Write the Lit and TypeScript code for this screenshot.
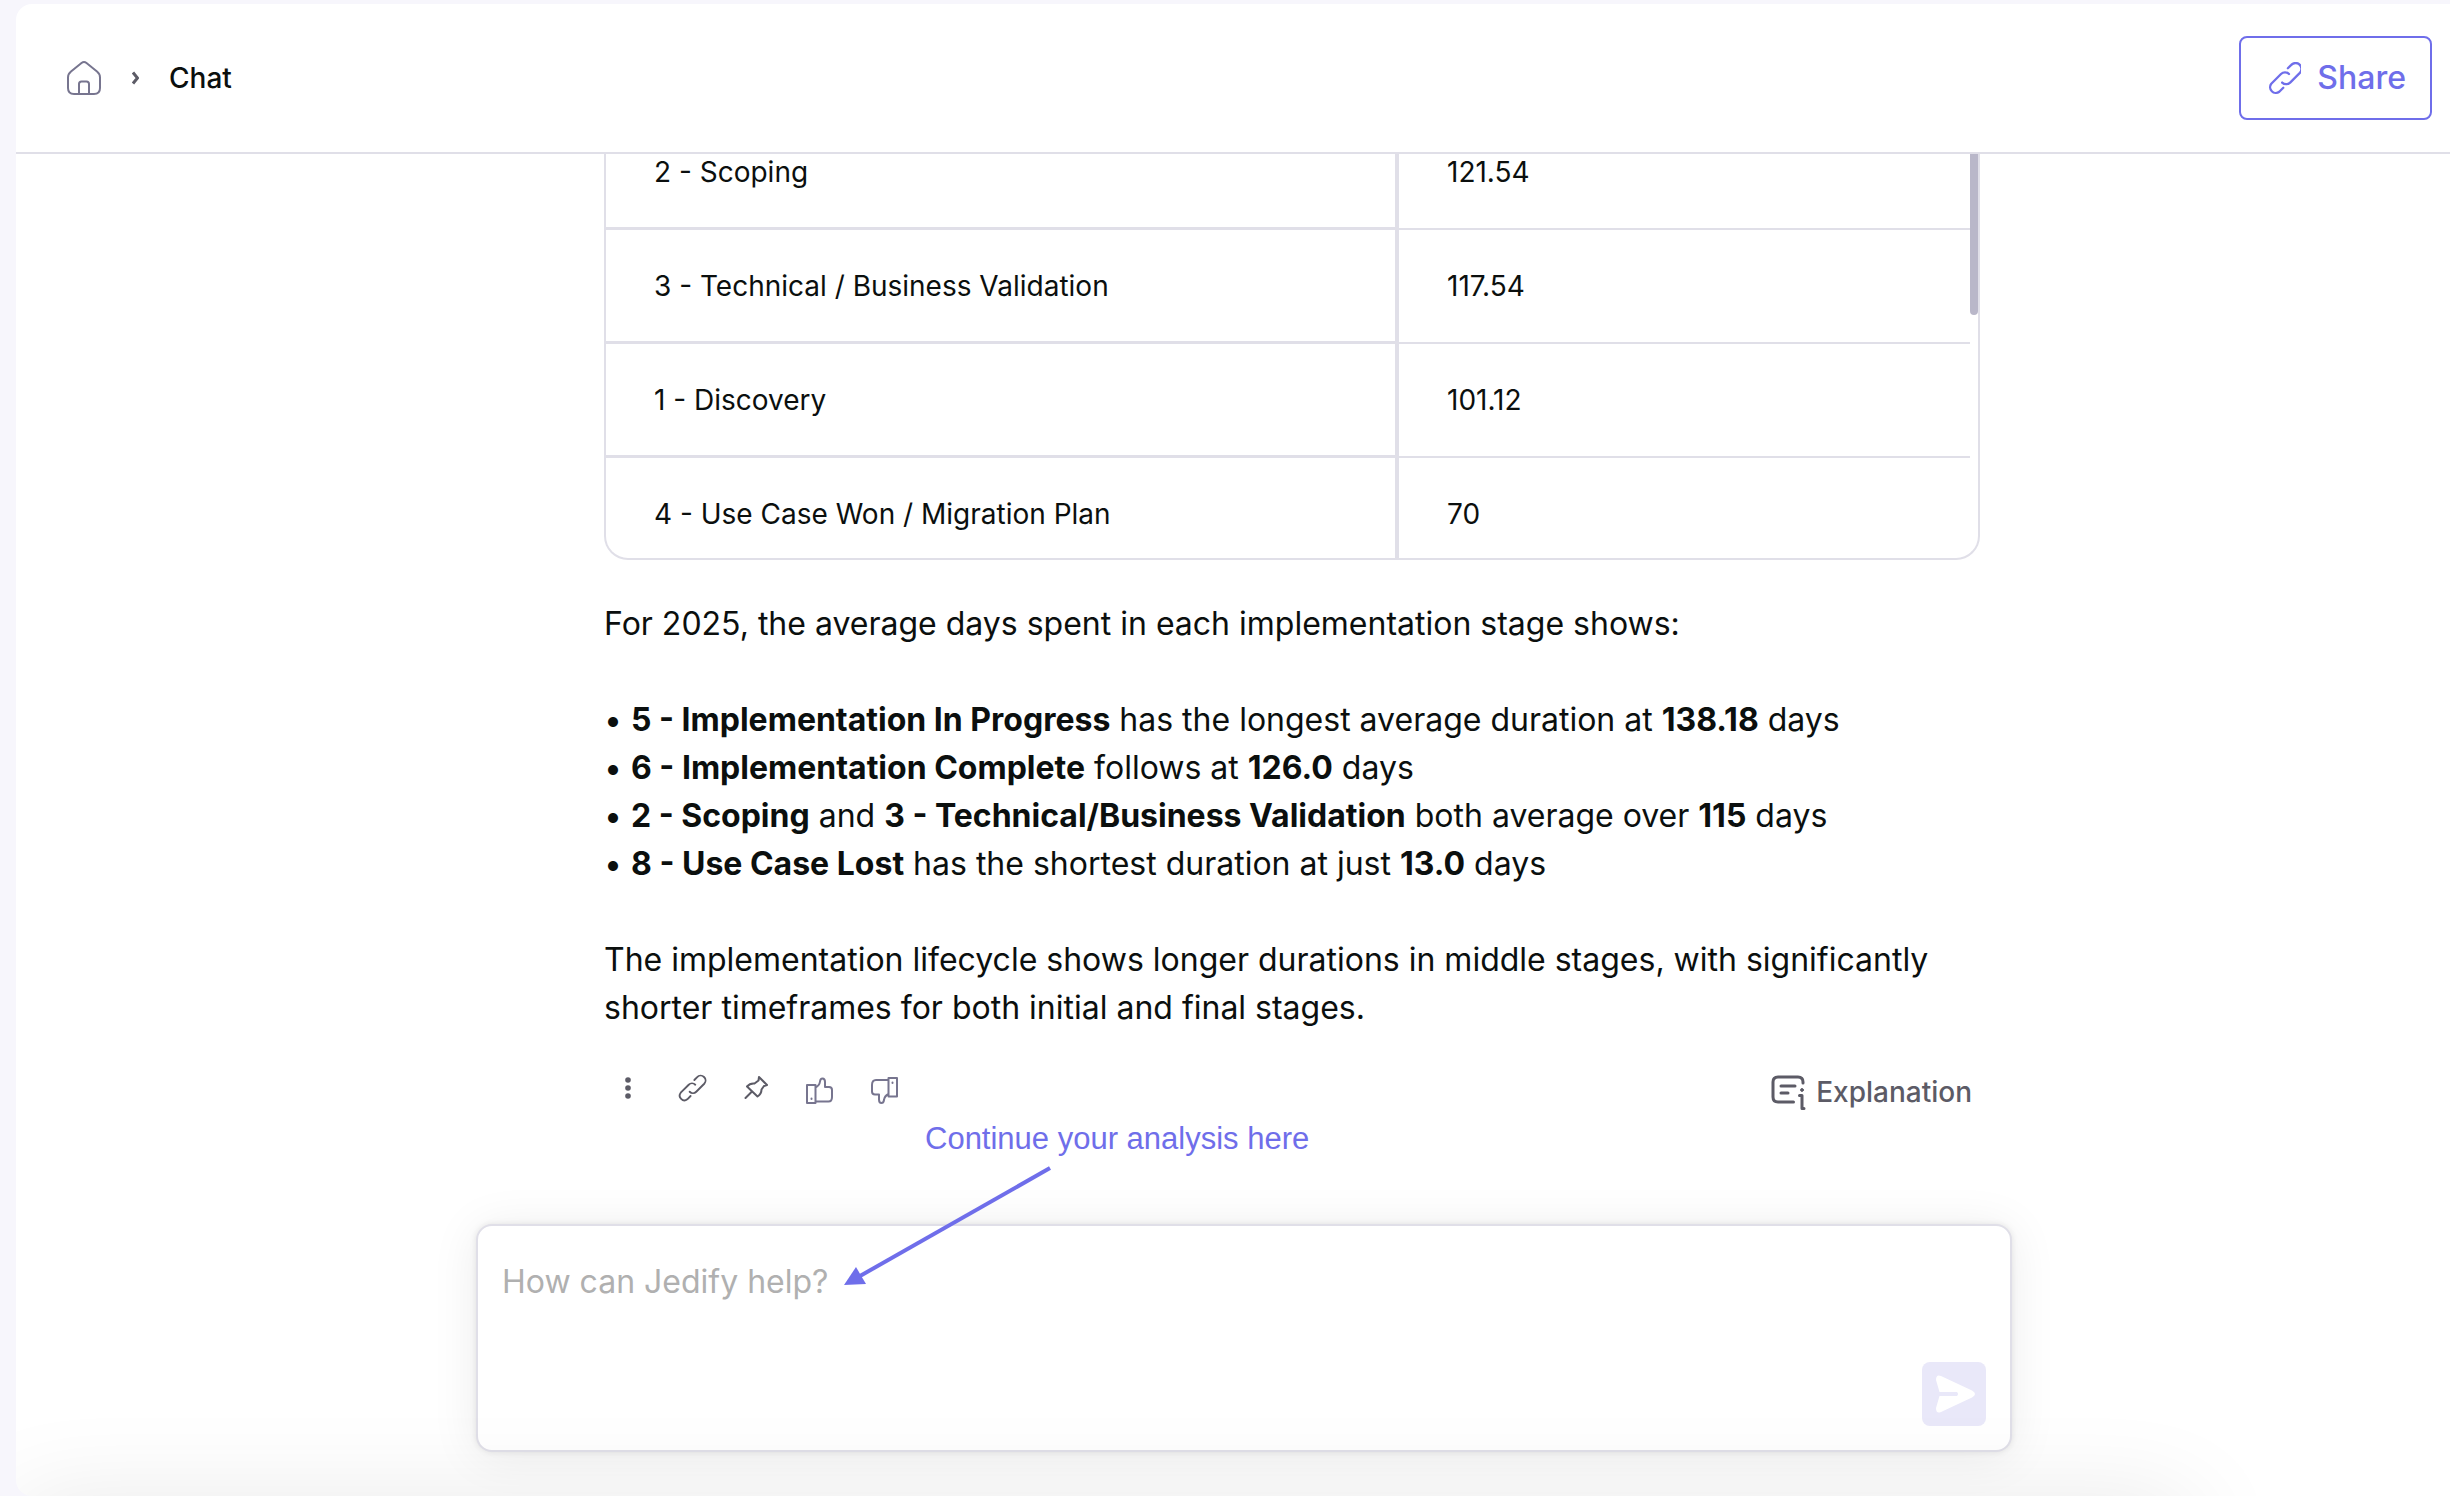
import { LitElement, html, css } from "lit";
import { customElement } from "lit/decorators.js";

const linkIcon = (viewBox: string) => html`<svg class="icon" viewBox=${viewBox} aria-hidden="true">
  <path d="M18.5 7.5 L21.5 4.5 A5 5 0 0 1 29 11.5 L20.5 20 A5 5 0 0 1 13.5 20" />
  <path d="M19.5 12.5 A5 5 0 0 0 12.5 12.5 L4 21 A5 5 0 0 0 11 28 L14.5 24.5" />
</svg>`;

interface StageRow {
  stage: string;
  days: string;
}

const rows: StageRow[] = [
  { stage: "2 - Scoping", days: "121.54" },
  { stage: "3 - Technical / Business Validation", days: "117.54" },
  { stage: "1 - Discovery", days: "101.12" },
  { stage: "4 - Use Case Won / Migration Plan", days: "70" },
];

@customElement("app-root")
export class AppRoot extends LitElement {
  static styles = css`
    :host {
      --ink: #0b0f0e;
      --line: #e0dfe8;
      --accent: #6f6eea;
      --muted: #5c5b66;
      --slate: #77758f;
      display: flex;
      box-sizing: border-box;
      height: 100vh;
      padding: 4px 0 0 16px;
      overflow: hidden;
      background: #f7f6fc;
      color: var(--ink);
      font: 400 32px/48px Inter, sans-serif;
    }
    * {
      box-sizing: border-box;
    }
    button {
      display: flex;
      align-items: center;
      justify-content: center;
      margin: 0;
      padding: 0;
      border: 0;
      background: none;
      color: var(--muted);
      font: inherit;
      cursor: pointer;
    }
    .icon {
      display: block;
      width: 32px;
      height: 32px;
      fill: none;
      stroke: currentColor;
      stroke-width: 2;
      stroke-linecap: round;
      stroke-linejoin: round;
    }
    .panel {
      position: relative;
      display: flex;
      flex: 1;
      flex-direction: column;
      min-width: 0;
      overflow: hidden;
      border-radius: 16px 0 0 16px;
      background: #fff;
    }
    .header {
      display: flex;
      flex: none;
      align-items: center;
      justify-content: space-between;
      height: 150px;
      padding: 0 18px 0 50px;
      border-bottom: 2px solid var(--line);
    }
    .crumbs {
      display: flex;
      align-items: center;
      gap: 30px;
      font-size: 28px;
      font-weight: 500;
    }
    .home {
      display: flex;
      color: var(--slate);
    }
    .home .icon {
      width: 36px;
      height: 36px;
    }
    .chevron {
      width: 7px;
      height: 14px;
      fill: none;
      stroke: var(--muted);
      stroke-width: 3;
    }
    .share {
      gap: 16px;
      height: 84px;
      padding: 0 24px 0 28px;
      border: 2px solid var(--accent);
      border-radius: 8px;
      color: var(--accent);
      font-weight: 500;
    }
    .thread {
      display: flex;
      flex: 1;
      flex-direction: column;
      justify-content: flex-end;
      width: 100%;
      max-width: 1558px;
      min-height: 0;
      margin: 0 auto;
      padding: 0 32px 2px 150px;
      overflow: hidden;
    }
    .result {
      display: flex;
      flex: none;
      height: 444px;
      overflow: hidden;
      border: 2px solid var(--line);
      border-top: 0;
      border-radius: 0 0 24px 24px;
    }
    .stages {
      flex: 1;
      table-layout: fixed;
      height: 456px;
      border-spacing: 0;
      font-size: 28px;
    }
    td {
      height: 114px;
      padding: 0 48px;
      border-bottom: 2px solid var(--line);
    }
    .stage {
      border-right: 4px solid var(--line);
      border-bottom-width: 3px;
    }
    .days {
      width: 571px;
    }
    .thumb {
      width: 8px;
      height: 199px;
      border-radius: 4px;
      background: #b9b7c9;
    }
    .answer {
      flex: none;
      padding: 40px 0 0;
    }
    p,
    ul {
      margin: 0 0 48px;
      padding: 0;
      list-style: none;
    }
    .closing {
      margin: 0;
    }
    .actions {
      display: flex;
      flex: none;
      align-items: flex-start;
      justify-content: space-between;
      margin-top: 32px;
      padding-right: 8px;
    }
    .tools {
      display: flex;
      align-items: center;
      gap: 32px;
      height: 48px;
      padding-left: 8px;
    }
    .tools .rating {
      color: var(--slate);
    }
    .explain {
      gap: 10px;
      padding-top: 4px;
      font-size: 28px;
      font-weight: 500;
    }
    .explain .icon {
      width: 36px;
      height: 36px;
      stroke-width: 3;
    }
    .dock {
      position: relative;
      flex: none;
      width: 100%;
      max-width: 1558px;
      margin: 0 auto;
      padding: 106px 0 44px 22px;
    }
    .composer {
      display: flex;
      align-items: flex-end;
      gap: 24px;
      height: 228px;
      padding: 24px;
      border: 2px solid var(--line);
      border-radius: 16px;
      background: #fff;
      box-shadow: 0 0 6px #00000018, 0 4px 48px #00000014;
    }
    .prompt {
      flex: 1;
      align-self: stretch;
      padding: 8px 0 0;
      border: 0;
      outline: 0;
      resize: none;
      background: none;
      color: var(--ink);
      font: inherit;
    }
    .prompt::placeholder {
      color: #b0b0b0;
      opacity: 1;
    }
    .send {
      width: 64px;
      height: 64px;
      border-radius: 8px;
      background: #e9e8f9;
    }
    .send svg {
      width: 64px;
      height: 64px;
    }
    .hint {
      position: absolute;
      top: 0;
      left: 390px;
      display: flex;
      flex-direction: column;
      color: var(--accent);
      font: 400 31px/42px "Liberation Sans", sans-serif;
      pointer-events: none;
    }
    .hint span {
      padding-left: 81px;
    }
    .hint svg {
      width: 208px;
      height: 120px;
      margin-top: 6px;
    }
    .fade {
      position: absolute;
      top: 100%;
      right: 260px;
      left: 0;
      height: 80px;
      box-shadow: 0 8px 100px #0000001a;
      pointer-events: none;
    }
  `;

  render() {
    return html`
      <main class="panel">
        <header class="header">
          <nav class="crumbs" aria-label="Breadcrumb">
            <a class="home" href="#" aria-label="Home">
              <svg class="icon" viewBox="0 0 36 36" aria-hidden="true">
                <path d="M15.5 3 Q18 1 20.5 3 L31 11.5 Q34 14 34 17.5 V28 Q34 34 28 34 H8 Q2 34 2 28 V17.5 Q2 14 5 11.5 Z" />
                <path d="M13 33.5 V24 Q13 21.5 15.5 21.5 H20.5 Q23 21.5 23 24 V33.5" />
              </svg>
            </a>
            <svg class="chevron" viewBox="0 0 7 14" aria-hidden="true"><path d="M1 1.5 L5.5 7 L1 12.5" /></svg>
            <span>Chat</span>
          </nav>
          <button class="share" type="button">${linkIcon("2 2 28 28")}<span>Share</span></button>
        </header>

        <section class="thread">
          <div class="result">
            <table class="stages" aria-label="Average days by stage">
              <tbody>
                ${rows.map(
                  (r) => html`<tr>
                    <td class="stage">${r.stage}</td>
                    <td class="days">${r.days}</td>
                  </tr>`
                )}
              </tbody>
            </table>
            <div class="thumb"></div>
          </div>
          <article class="answer">
            <p>For 2025, the average days spent in each implementation stage shows:</p>
            <ul>
              <li>• <b>5 - Implementation In Progress</b> has the longest average duration at <b>138.18</b> days</li>
              <li>• <b>6 - Implementation Complete</b> follows at <b>126.0</b> days</li>
              <li>• <b>2 - Scoping</b> and <b>3 - Technical/Business Validation</b> both average over <b>115</b> days</li>
              <li>• <b>8 - Use Case Lost</b> has the shortest duration at just <b>13.0</b> days</li>
            </ul>
            <p class="closing">
              The implementation lifecycle shows longer durations in middle stages, with significantly shorter
              timeframes for both initial and final stages.
            </p>
          </article>
          <div class="actions">
            <div class="tools">
              <button type="button" aria-label="More">
                <svg class="icon" viewBox="0 0 32 32">
                  <g fill="currentColor" stroke="none">
                    <circle cx="16" cy="8" r="2.8" /><circle cx="16" cy="16" r="2.8" /><circle cx="16" cy="24" r="2.8" />
                  </g>
                </svg>
              </button>
              <button type="button" aria-label="Copy link">${linkIcon("-1 -1 34 34")}</button>
              <button type="button" aria-label="Pin">
                <svg class="icon" viewBox="0 0 32 32">
                  <path d="M19 5 L27 13 L24 14 L21.5 17.5 Q21.5 22 17.5 24.5 L7 14.5 Q10 11 14.5 11.5 L18.5 8.5 Z M12 19.5 L5.5 26" />
                </svg>
              </button>
              <button class="rating" type="button" aria-label="Good answer">
                <svg class="icon" viewBox="0 -1 32 32">
                  <path d="M3 12 H11.5 V30 H3 Z M11.5 14.5 Q15.5 12.5 16 8.5 Q16.3 5.5 18.5 5.5 Q21 5.5 21 9 V14 H25 Q28 14 28 17 V24 Q28 28.5 24.5 28.5 H11.5" />
                  <path d="M7.5 25.5 V26" />
                </svg>
              </button>
              <button class="rating" type="button" aria-label="Bad answer">
                <svg class="icon" viewBox="0 -1 32 32">
                  <path d="M29 5 V23.5 H20.5 V5 Z M20.5 21 Q16.5 23 16 27 Q15.5 30 13.5 30 Q11 30 11 26.5 V21.5 H7 Q4 21.5 4 18.5 V12 Q4 7 8 7 H20.5" />
                  <path d="M24.5 9.5 V10" />
                </svg>
              </button>
            </div>
            <button class="explain" type="button">
              <svg class="icon" viewBox="0 0 36 36" aria-hidden="true">
                <path d="M23.5 28 H8 Q3 28 3 23 V8 Q3 3 8 3 H28 Q33 3 33 8 V9" />
                <path d="M11 12 H25 M11 19 H18 M29.5 21.5 H32 V34.5 H34" />
                <circle cx="32" cy="16" r="1.4" fill="currentColor" stroke-width="1" />
              </svg>
              <span>Explanation</span>
            </button>
          </div>
        </section>

        <form class="dock" @submit=${(e: Event) => e.preventDefault()}>
          <div class="composer">
            <textarea class="prompt" aria-label="Message" placeholder="How can Jedify help?"></textarea>
            <button class="send" type="submit" aria-label="Send">
              <svg viewBox="0 0 64 64" aria-hidden="true">
                <path
                  fill="#fff"
                  d="M14 18 Q14 12 19 14 L50 28.5 Q56 32 50 35.5 L19 50 Q14 52 14 46 L17.5 34 H35 Q37 32 35 30 H17.5 Z"
                />
              </svg>
            </button>
          </div>
          <div class="hint">
            <span>Continue your analysis here</span>
            <svg viewBox="0 0 208 120" aria-hidden="true">
              <path d="M206 2 L16 110" stroke="currentColor" stroke-width="4" />
              <path d="M0 119 L12 101 L22 118 Z" fill="currentColor" />
            </svg>
          </div>
        </form>
        <div class="fade"></div>
      </main>
    `;
  }
}
